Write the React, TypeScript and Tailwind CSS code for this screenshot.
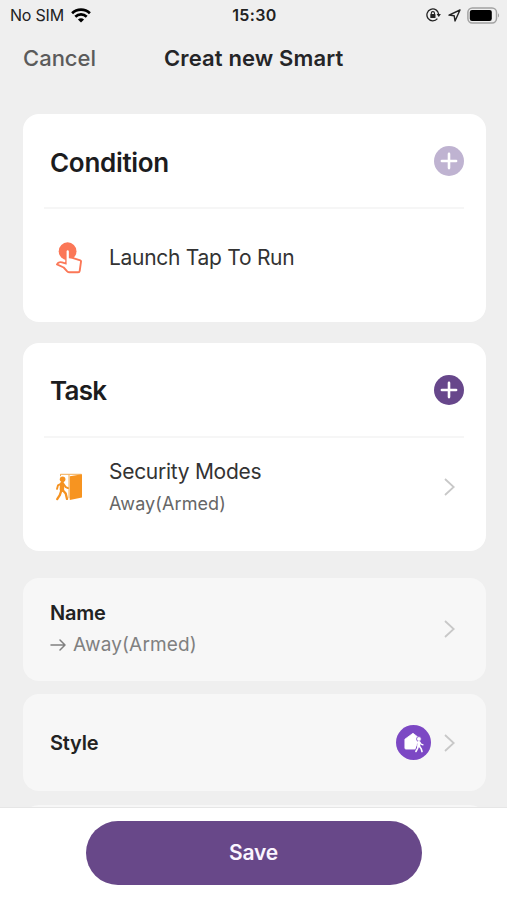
import type { ReactNode } from "react";

type IconProps = { className?: string };

function WifiIcon() {
  return (
    <svg className="ml-[7px] h-[15px] w-5" viewBox="0 0 20 15" fill="none" stroke="#000" strokeWidth="2.7">
      <path d="M1.1 5.3a12.7 12.7 0 0 1 17.8 0" />
      <path d="M4.3 8.7a8.2 8.2 0 0 1 11.4 0" />
      <path d="M10 14.6 6.9 11.6a4.5 4.5 0 0 1 6.2 0Z" fill="#000" stroke="none" />
    </svg>
  );
}

function RotationLockIcon() {
  return (
    <svg className="h-[14px] w-[15px]" viewBox="0 0 15 14" fill="none" stroke="#222" strokeWidth="1.3">
      <path d="M12.7 6.4a5.9 5.9 0 1 0-1.3 4.2" />
      <path d="M10.6 6h4.3l-2.1 3.1Z" fill="#222" stroke="none" />
      <path d="M5.3 6.6V5.2a1.6 1.6 0 0 1 3.2 0v1.4" strokeWidth="1.1" />
      <rect x="4.3" y="6.1" width="5.2" height="4" rx="0.6" fill="#222" stroke="none" />
    </svg>
  );
}

function LocationIcon() {
  return (
    <svg className="ml-[7px] h-[13px] w-[13px]" viewBox="0 0 13 13" fill="none" stroke="#222" strokeWidth="1.4" strokeLinejoin="round">
      <path d="M12 1 1 6.1l5.2.7.8 5.2Z" />
    </svg>
  );
}

function BatteryIcon() {
  return (
    <svg className="ml-[6px] h-[17px] w-[33px]" viewBox="0 0 33 17" fill="none">
      <rect x="0.9" y="0.9" width="28.6" height="15" rx="4.4" stroke="#a3a3a3" strokeWidth="1.5" />
      <rect x="2.8" y="2.9" width="22" height="11" rx="2.2" fill="#000" />
      <path d="M31 6.2c1.4.6 1.4 3.8 0 4.4Z" fill="#a3a3a3" />
    </svg>
  );
}

function TapIcon() {
  return (
    <svg className="h-8 w-[26px]" viewBox="0 0 26 32">
      <circle cx="11.6" cy="9.2" r="8.9" fill="#fb7757" />
      <path
        d="M10.2 9.8c0-2 3-2 3 0v5.6l3.2.4 7.9 2.6c.6.2.8.7.7 1.3l-1.3 9.2c-.1 1-.7 1.4-1.6 1.4H13.6c-1 0-1.7-.3-2.4-1L7.7 25.5 1 22.4c.8-1.9 2.8-2.6 5-2l4.2 1.2Z"
        fill="#fff"
        stroke="#fb7757"
        strokeWidth="1.9"
        strokeLinejoin="round"
      />
      <path d="M11.7 9.4v12" stroke="#fff" strokeWidth="2.2" strokeLinecap="round" />
    </svg>
  );
}

function DoorIcon() {
  return (
    <svg className="h-7 w-7" viewBox="0 0 28 28" fill="none">
      <path d="M5.5 3.2V1.3h21M14 1.8v23.5" stroke="#f3a33c" strokeWidth="0.9" />
      <path d="M14.8 3.2 27 1.2v23.2l-12.2 2.5Z" fill="#f79420" />
      <circle cx="7.6" cy="6.2" r="2.8" fill="#f59220" />
      <g stroke="#f59220" strokeLinecap="round" strokeLinejoin="round">
        <path d="m7.1 11-.2 5.8" strokeWidth="4.4" />
        <path d="M6.4 10.5 3 12.3l-1 3.6M8.5 11l2.3 3.1 2.2 1" strokeWidth="1.9" />
        <path d="m6.4 17.3-1.6 4.9-2.6 3.9M7.8 17.2l2.9 3.4 1.3 5.3" strokeWidth="2.3" />
      </g>
    </svg>
  );
}

function LeaveHomeIcon() {
  return (
    <svg className="h-[35px] w-[35px]" viewBox="0 0 35 35" fill="none">
      <circle cx="17.5" cy="17.5" r="17.5" fill="#7c48c4" />
      <path d="m17 8.3 7.2 5.6v2.1l-3.8 3.6.6 4.5H9.9a1 1 0 0 1-1-1v-8.9Z" fill="#fff" stroke="#fff" strokeWidth="0.8" strokeLinejoin="round" />
      <path d="M23 17v4M22.2 21.5l-1.8 5" stroke="#7c48c4" strokeWidth="3.4" strokeLinecap="round" />
      <circle cx="22.9" cy="14" r="2.4" fill="#fff" stroke="#7c48c4" strokeWidth="0.8" />
      <g stroke="#fff" strokeLinecap="round" strokeLinejoin="round">
        <path d="m22.9 17.6-.2 3.3" strokeWidth="3" />
        <path d="m22.2 17-2 1.4-.6 2M23.7 17.2l1.4 2 1.9.7" strokeWidth="1.3" />
        <path d="m22.2 21-.7 2.7-1.6 2.8M23.3 21l1.8 2.6.9 3" strokeWidth="1.6" />
      </g>
    </svg>
  );
}

function PlusIcon({ className }: IconProps) {
  return (
    <svg className={`h-[30px] w-[30px] ${className}`} viewBox="0 0 30 30">
      <circle cx="15" cy="15" r="15" fill="currentColor" />
      <path d="M15 7.9v14.2M7.9 15h14.2" stroke="#fff" strokeWidth="2.6" strokeLinecap="round" />
    </svg>
  );
}

function Chevron() {
  return (
    <svg className="h-[18px] w-[11px]" viewBox="0 0 11 18" fill="none">
      <path d="m1 1 8.7 8L1 17" stroke="#c8c8c8" strokeWidth="1.8" />
    </svg>
  );
}

function ArrowIcon() {
  return (
    <svg className="mr-[7px] h-3 w-4" viewBox="0 0 16 12" fill="none" stroke="#808080" strokeWidth="1.5" strokeLinecap="round" strokeLinejoin="round">
      <path d="M1 6h13.8M10 1l5 5-5 5" />
    </svg>
  );
}

type SectionProps = {
  title: string;
  titleClass: string;
  plusClass: string;
  children: ReactNode;
};

function Section({ title, titleClass, plusClass, children }: SectionProps) {
  return (
    <section className="flex h-52 shrink-0 flex-col rounded-2xl bg-white pr-[22px] pl-[21px]">
      <div className="flex h-[95px] items-center justify-between border-b-2 border-[#f6f6f6] pt-px pl-[6px]">
        <h2 className={`text-[26px] font-semibold text-[#1c1c1e] ${titleClass}`}>{title}</h2>
        <button aria-label={`Add ${title.toLowerCase()}`}>
          <PlusIcon className={plusClass} />
        </button>
      </div>
      {children}
    </section>
  );
}

export default function App() {
  return (
    <div className="flex h-[900px] w-full flex-col overflow-hidden bg-[#efefef] font-['Inter',sans-serif]">
      <header className="shrink-0">
        <div className="grid h-[30px] grid-cols-3 items-center pr-[7px] pl-[10px] text-[#222]">
          <div className="flex items-center text-base">
            <span className="tracking-[-0.2px]">No SIM</span>
            <WifiIcon />
          </div>
          <span className="pr-px text-center text-base font-semibold tracking-[0.4px]">15:30</span>
          <div className="flex items-center justify-end">
            <RotationLockIcon />
            <LocationIcon />
            <BatteryIcon />
          </div>
        </div>
        <div className="grid h-[56px] grid-cols-[141px_1fr] items-center pl-[23px] text-[22px] leading-none">
          <button className="text-left font-medium text-[#5b5b5b]">Cancel</button>
          <h1 className="font-semibold tracking-[0.13px] text-[#252527]">Creat new Smart</h1>
        </div>
      </header>

      <main className="mt-7 ml-[23px] flex min-h-0 w-[463px] flex-1 flex-col overflow-hidden">
        <Section title="Condition" titleClass="pt-[2px] tracking-[-0.3px]" plusClass="text-[#bfb3d1]">
          <div className="flex h-[97px] items-center pl-[12px]">
            <TapIcon />
            <span className="ml-[27px] text-[21px] tracking-[-0.28px] text-[#333]">Launch Tap To Run</span>
          </div>
        </Section>

        <div className="mt-[21px] shrink-0">
          <Section title="Task" titleClass="tracking-[-0.7px]" plusClass="text-[#67478b]">
            <div className="flex h-[98px] items-center pr-[9px] pl-[11px]">
              <DoorIcon />
              <div className="ml-[26px] flex-1 pt-px">
                <p className="text-[21px] leading-8 tracking-[-0.28px] text-[#333]">Security Modes</p>
                <p className="text-[18px] leading-8 tracking-[0.1px] text-[#666]">Away(Armed)</p>
              </div>
              <Chevron />
            </div>
          </Section>
        </div>

        <section className="mt-[27px] flex h-[103px] shrink-0 items-center rounded-2xl bg-[#f7f7f7] pr-[31px] pb-[2px] pl-[27px]">
          <div className="flex-1">
            <p className="text-[20px] leading-8 font-semibold tracking-[-0.2px] text-[#222]">Name</p>
            <p className="flex items-center text-[19px] leading-8 tracking-[0.15px] text-[#808080]">
              <ArrowIcon />
              Away(Armed)
            </p>
          </div>
          <Chevron />
        </section>

        <section className="mt-[13px] flex h-[97px] shrink-0 items-center rounded-2xl bg-[#f7f7f7] pr-[31px] pl-[27px]">
          <p className="flex-1 text-[20px] font-semibold tracking-[-0.2px] text-[#222]">Style</p>
          <LeaveHomeIcon />
          <div className="ml-[13px] flex">
            <Chevron />
          </div>
        </section>

        <section className="mt-[14px] h-[97px] shrink-0 rounded-2xl bg-[#f7f7f7]" />
      </main>

      <footer className="flex h-[93px] shrink-0 justify-center border-t border-[#e6e6e6] bg-white pt-[13px]">
        <button className="h-16 w-[336px] rounded-full bg-[#684889] text-[21px] font-semibold tracking-[-0.15px] text-[#fbf5ff]">
          Save
        </button>
      </footer>
    </div>
  );
}
